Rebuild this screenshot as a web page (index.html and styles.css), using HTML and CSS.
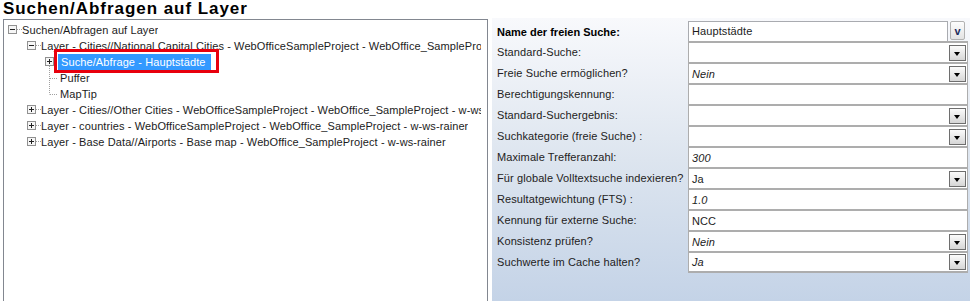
FILE: index.html
```html
<!DOCTYPE html>
<html>
<head>
  <title>Suchen/Abfragen auf Layer</title>
  <link rel="stylesheet" href="styles.css">
</head>
<body>
  <h1 class="title">Suchen/Abfragen auf Layer</h1>
  <div class="main">
    <div class="tree">
      <div class="node lv0">
        <svg class="twig" width="14" height="16"><rect x="0.5" y="3.5" width="8" height="8" fill="#f6f6f6" stroke="#919191"/><path d="M2 7.5h5" stroke="#222"/><path d="M9 7.5h5" stroke="#a0a0a0" stroke-dasharray="1 1"/></svg>
        <span>Suchen/Abfragen auf Layer</span>
      </div>
      <div class="node lv1">
        <svg class="twig" width="14" height="16"><rect x="0.5" y="3.5" width="8" height="8" fill="#f6f6f6" stroke="#919191"/><path d="M2 7.5h5" stroke="#222"/><path d="M9 7.5h5" stroke="#a0a0a0" stroke-dasharray="1 1"/></svg>
        <span>Layer - Cities//National Capital Cities - WebOfficeSampleProject - WebOffice_SampleProject - w-ws-rainer</span>
      </div>
      <div class="node lv2">
        <svg class="twig" width="13" height="16"><rect x="0.5" y="3.5" width="8" height="8" fill="#f6f6f6" stroke="#919191"/><path d="M2 7.5h5M4.5 5v5" stroke="#222"/><path d="M4.5 12v4" stroke="#a0a0a0" stroke-dasharray="1 1"/></svg>
        <span class="sel">Suche/Abfrage - Hauptstädte</span>
      </div>
      <div class="node lv2">
        <svg class="twig" width="13" height="16"><path d="M4.5 0v16M5 8.5h8" stroke="#a0a0a0" stroke-dasharray="1 1"/></svg>
        <span class="leaf">Puffer</span>
      </div>
      <div class="node lv2">
        <svg class="twig" width="13" height="16"><path d="M4.5 0v8.5M5 8.5h8" stroke="#a0a0a0" stroke-dasharray="1 1"/></svg>
        <span class="leaf">MapTip</span>
      </div>
      <div class="node lv1">
        <svg class="twig" width="14" height="16"><rect x="0.5" y="3.5" width="8" height="8" fill="#f6f6f6" stroke="#919191"/><path d="M2 7.5h5M4.5 5v5" stroke="#222"/><path d="M9 7.5h5" stroke="#a0a0a0" stroke-dasharray="1 1"/></svg>
        <span>Layer - Cities//Other Cities - WebOfficeSampleProject - WebOffice_SampleProject - w-ws-rainer</span>
      </div>
      <div class="node lv1">
        <svg class="twig" width="14" height="16"><rect x="0.5" y="3.5" width="8" height="8" fill="#f6f6f6" stroke="#919191"/><path d="M2 7.5h5M4.5 5v5" stroke="#222"/><path d="M9 7.5h5" stroke="#a0a0a0" stroke-dasharray="1 1"/></svg>
        <span>Layer - countries - WebOfficeSampleProject - WebOffice_SampleProject - w-ws-rainer</span>
      </div>
      <div class="node lv1">
        <svg class="twig" width="14" height="16"><rect x="0.5" y="3.5" width="8" height="8" fill="#f6f6f6" stroke="#919191"/><path d="M2 7.5h5M4.5 5v5" stroke="#222"/><path d="M9 7.5h5" stroke="#a0a0a0" stroke-dasharray="1 1"/></svg>
        <span>Layer - Base Data//Airports - Base map - WebOffice_SampleProject - w-ws-rainer</span>
      </div>
    </div>

    <div class="props">
      <div class="row first">
        <div class="label strong">Name der freien Suche:</div>
        <div class="cell">
          <div class="field">Hauptstädte</div>
          <div class="pick">v</div>
        </div>
      </div>
      <div class="row">
        <div class="label">Standard-Suche:</div>
        <div class="value"><span></span><div class="drop"></div></div>
      </div>
      <div class="row">
        <div class="label">Freie Suche ermöglichen?</div>
        <div class="value"><span class="it">Nein</span><div class="drop"></div></div>
      </div>
      <div class="row">
        <div class="label">Berechtigungskennung:</div>
        <div class="value"><span></span></div>
      </div>
      <div class="row">
        <div class="label">Standard-Suchergebnis:</div>
        <div class="value"><span></span><div class="drop"></div></div>
      </div>
      <div class="row">
        <div class="label">Suchkategorie (freie Suche) :</div>
        <div class="value"><span></span><div class="drop"></div></div>
      </div>
      <div class="row">
        <div class="label">Maximale Trefferanzahl:</div>
        <div class="value"><span class="it">300</span></div>
      </div>
      <div class="row">
        <div class="label">Für globale Volltextsuche indexieren?</div>
        <div class="value"><span>Ja</span><div class="drop"></div></div>
      </div>
      <div class="row">
        <div class="label">Resultatgewichtung (FTS) :</div>
        <div class="value"><span class="it">1.0</span></div>
      </div>
      <div class="row">
        <div class="label">Kennung für externe Suche:</div>
        <div class="value"><span>NCC</span></div>
      </div>
      <div class="row">
        <div class="label">Konsistenz prüfen?</div>
        <div class="value"><span class="it">Nein</span><div class="drop"></div></div>
      </div>
      <div class="row last">
        <div class="label">Suchwerte im Cache halten?</div>
        <div class="value"><span class="it">Ja</span><div class="drop"></div></div>
      </div>
    </div>
  </div>
</body>
</html>
```

FILE: styles.css
```css
body {
  margin: 0;
  width: 970px;
  height: 301px;
  overflow: hidden;
  background: #fff;
  font-family: "Liberation Sans", Arial, sans-serif;
  font-size: 11px;
  letter-spacing: 0.1px;
  color: #1c1c1c;
}
.title {
  margin: 0;
  padding-left: 3px;
  height: 18px;
  font-size: 17px;
  line-height: 18px;
  font-weight: bold;
  letter-spacing: 0.95px;
  color: #000;
}
.main {
  display: flex;
  height: 283px;
}

/* tree */
.tree {
  margin-left: 3px;
  margin-top: 1px;
  width: 477px;
  border: 1px solid #828790;
  border-bottom: none;
  padding: 2px 6px 0 0;
  white-space: nowrap;
}
.node {
  display: flex;
  align-items: center;
  height: 16px;
}
.node span {
  min-width: 0;
  overflow: hidden;
}
.twig {
  flex: none;
}
.lv0 {
  padding-left: 4px;
}
.lv1 {
  padding-left: 23px;
}
.lv2 {
  padding-left: 41px;
}
.node .sel {
  position: relative;
  overflow: visible;
  background: #3399ff;
  color: #fff;
  line-height: 16px;
  padding: 0 5px 0 3px;
}
.sel::after {
  content: "";
  position: absolute;
  left: -4px;
  top: -5px;
  right: -8px;
  bottom: -3px;
  border: 3px solid #e8000d;
}
.leaf {
  margin-left: 2px;
}

/* property grid */
.props {
  margin-left: 4px;
  width: 478px;
  padding-top: 3px;
  background: linear-gradient(#f8f9fc, #dde5ef 50%, #c4d3e7);
}
.row {
  display: grid;
  grid-template-columns: 196px 280px;
  height: 21px;
}
.row.first {
  height: 20px;
}
.label {
  padding: 1px 0 0 5px;
  line-height: 21px;
  color: #231c22;
}
.first .label {
  line-height: 22px;
  padding-top: 0;
}
.strong {
  font-weight: bold;
  letter-spacing: 0;
  color: #000;
}
.cell {
  display: flex;
}
.field {
  width: 255px;
  border: 1px solid #a9abb0;
  background: #fff;
  padding-left: 3px;
  line-height: 19px;
}
.pick {
  width: 13px;
  height: 17px;
  margin-left: 2px;
  border: 1px solid #b2b2b2;
  border-radius: 2px;
  background: linear-gradient(#fdfdfd, #e3e3e3);
  text-align: center;
  font-weight: bold;
  line-height: 18px;
  color: #1d2b5c;
}
.value {
  display: flex;
  align-items: center;
  justify-content: space-between;
  background: #fff;
  border-left: 1px solid #adadad;
  border-right: 1px solid #adadad;
  border-top: 2px solid #adadad;
  padding-left: 3px;
}
.row.last .value {
  border-bottom: 2px solid #adadad;
}
.it {
  font-style: italic;
}
.drop {
  position: relative;
  width: 15px;
  height: 14px;
  margin-right: 1px;
  border: 1px solid #6e6e6e;
  background: linear-gradient(#fbfbfb, #d6d6d6);
}
.drop::after {
  content: "";
  position: absolute;
  left: 4px;
  top: 6px;
  border-top: 4px solid #000;
  border-left: 3.5px solid transparent;
  border-right: 3.5px solid transparent;
}
```
